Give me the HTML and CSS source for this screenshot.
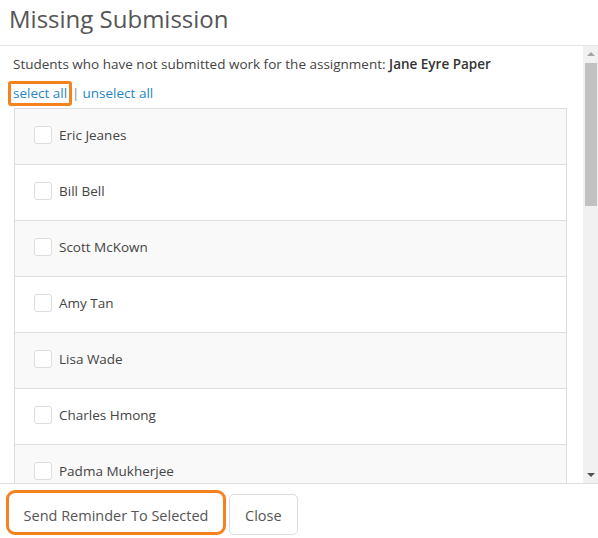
FILE: index.html
```html
<!DOCTYPE html>
<html>
<head>
<meta charset="utf-8">
<link rel="stylesheet" href="styles.css">
</head>
<body>
<div class="modal">
  <div class="modal-header">
    <h1 class="title">Missing Submission</h1>
  </div>
  <div class="modal-body">
    <div class="content">
      <p class="intro">Students who have not submitted work for the assignment: <strong>Jane Eyre Paper</strong></p>
      <div class="links">
        <a class="link highlight" href="#">select all</a><span class="sep">|</span><a class="link" href="#">unselect all</a>
      </div>
      <ul class="students">
        <li class="row"><span class="check"></span><span class="name">Eric Jeanes</span></li>
        <li class="row"><span class="check"></span><span class="name">Bill Bell</span></li>
        <li class="row"><span class="check"></span><span class="name">Scott McKown</span></li>
        <li class="row"><span class="check"></span><span class="name">Amy Tan</span></li>
        <li class="row"><span class="check"></span><span class="name">Lisa Wade</span></li>
        <li class="row"><span class="check"></span><span class="name">Charles Hmong</span></li>
        <li class="row"><span class="check"></span><span class="name">Padma Mukherjee</span></li>
      </ul>
    </div>
    <div class="scrollbar">
      <div class="arrow up"></div>
      <div class="track"><div class="thumb"></div></div>
      <div class="arrow down"></div>
    </div>
  </div>
  <div class="modal-footer">
    <button class="btn btn-primary">Send Reminder To Selected</button>
    <button class="btn">Close</button>
  </div>
</div>
</body>
</html>
```

FILE: styles.css
```css
* { box-sizing: border-box; }
html, body { margin: 0; padding: 0; background: #fff; }
body {
  font-family: "Open Sans", "Liberation Sans", sans-serif;
  font-size: 13.5px;
  color: #444;
}
.modal {
  width: 598px;
  height: 538px;
  display: flex;
  flex-direction: column;
  overflow: hidden;
}
.modal-header {
  height: 46px;
  border-bottom: 1px solid #e5e5e5;
  padding: 0 9px;
}
.title {
  margin: 0;
  font-weight: 400;
  font-size: 24px;
  line-height: 38px;
  color: #555;
}
.modal-body {
  height: 438px;
  display: flex;
  border-bottom: 1px solid #ddd;
}
.content {
  flex: 1;
  overflow: hidden;
  padding: 8px 16px 0 13px;
}
.intro {
  margin: 0;
  line-height: 20px;
  color: #444;
}
.intro strong { font-weight: 600; color: #333; }
.links {
  margin-top: 7px;
  height: 27px;
  line-height: 19px;
}
.link {
  color: #1f86c6;
  text-decoration: none;
}
.link.highlight {
  display: inline-block;
  margin-left: -5px;
  padding: 0 2px;
  border: 3px solid #f5821f;
  border-radius: 3px;
}
.sep { color: #888; margin: 0 3px 0 0; }
.students {
  list-style: none;
  margin: 0 0 0 1px;
  padding: 0;
  border: 1px solid #ddd;
}
.row {
  height: 56px;
  display: flex;
  align-items: center;
  padding-left: 19px;
  padding-bottom: 3px;
  border-top: 1px solid #ddd;
  background: #fff;
}
.row:first-child { border-top: none; height: 55px; }
.row:nth-child(odd) { background: #f9f9f9; }
.check {
  width: 18px;
  height: 18px;
  border: 1px solid #ddd;
  border-radius: 3px;
  background: #fff;
  margin-right: 7px;
  flex: none;
}
.name { color: #444; }
.scrollbar {
  width: 15px;
  background: #f1f1f1;
  display: flex;
  flex-direction: column;
  align-items: center;
}
.arrow { height: 17px; width: 15px; position: relative; }
.arrow::after {
  content: "";
  position: absolute;
  left: 4px;
  top: 6px;
  border-left: 4px solid transparent;
  border-right: 4px solid transparent;
}
.arrow.up::after { border-bottom: 4px solid #a3a3a3; }
.arrow.down::after { border-top: 4px solid #505050; top: 7px; }
.track { flex: 1; width: 100%; padding: 0 1px 0 2px; }
.thumb {
  height: 143px;
  background: #c1c1c1;
}
.modal-footer {
  flex: 1;
  display: flex;
  align-items: flex-end;
  padding: 0 0 3px 6px;
  gap: 3px;
}
.btn {
  font-family: "Open Sans", "Liberation Sans", sans-serif;
  font-size: 14.5px;
  line-height: 20px;
  color: #555;
  background: #fff;
  border: 1px solid #ddd;
  border-radius: 5px;
  padding: 11px 15px 8px;
}
.btn-primary {
  width: 220px;
  border: 3px solid #f5821f;
  border-radius: 9px;
  padding: 13px 0 6px;
}
```
